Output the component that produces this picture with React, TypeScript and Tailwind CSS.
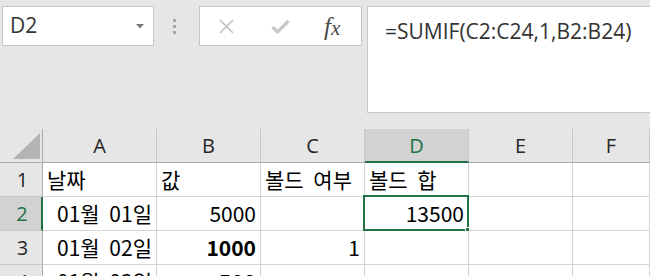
import React from 'react';

const CELL_FONT = "font-['Noto_Sans_CJK_KR','Noto_Sans',sans-serif]";

type Cell = { text?: string; align?: 'left' | 'right'; bold?: boolean };

const COLS = [
  { key: 'A', w: 'w-[114px]' },
  { key: 'B', w: 'w-[104px]' },
  { key: 'C', w: 'w-[104px]' },
  { key: 'D', w: 'w-[104px]' },
  { key: 'E', w: 'w-[104px]' },
  { key: 'F', w: 'flex-1' },
];

const ROWS: Cell[][] = [
  [{ text: '날짜' }, { text: '값' }, { text: '볼드 여부' }, { text: '볼드 합' }, {}, {}],
  [{ text: '01월 01일', align: 'right' }, { text: '5000', align: 'right' }, {}, { text: '13500', align: 'right' }, {}, {}],
  [{ text: '01월 02일', align: 'right' }, { text: '1000', align: 'right', bold: true }, { text: '1', align: 'right' }, {}, {}, {}],
  [{ text: '01월 03일', align: 'right' }, { text: '500', align: 'right', bold: true }, {}, {}, {}, {}],
];

function FormulaToolbar() {
  return (
    <div className="flex h-[129px] shrink-0 items-start pl-[2px] pt-[6px]">
      {/* name box */}
      <div className="flex h-[40px] w-[152px] items-center justify-between border border-[#c6c6c6] bg-white pl-[7px] pr-[9px]">
        <span className="font-['Open_Sans',sans-serif] text-[21px] text-[#333]">D2</span>
        <svg width="8" height="5" viewBox="0 0 8 5">
          <path d="M0 0h8L4 4.5z" fill="#7a7a7a" />
        </svg>
      </div>
      {/* grip */}
      <div className="flex h-[40px] w-[45px] flex-col items-center justify-center gap-[3px] pr-[4px]">
        <span className="h-[3px] w-[3px] bg-[#a6a6a6]" />
        <span className="h-[3px] w-[3px] bg-[#a6a6a6]" />
        <span className="h-[3px] w-[3px] bg-[#a6a6a6]" />
      </div>
      {/* cancel / enter / fx */}
      <div className="flex h-[40px] w-[163px] items-center border border-[#c6c6c6] bg-white pl-[18px]">
        <svg width="17" height="17" viewBox="0 0 17 17" className="mr-[36px]">
          <path d="M2 2l13 13M15 2L2 15" stroke="#c2c2c2" strokeWidth="1.7" fill="none" />
        </svg>
        <svg width="19" height="15" viewBox="0 0 19 15" className="mr-[34px]">
          <path d="M1.5 8l5 5L17.5 2" stroke="#c8c8c8" strokeWidth="3.2" fill="none" />
        </svg>
        <span className="font-['Liberation_Serif',serif] text-[25px] leading-none italic text-[#4a4a4a]">
          f<span className="text-[21px]">x</span>
        </span>
      </div>
      {/* formula bar */}
      <div className="ml-[5px] h-[107px] flex-1 border border-[#c6c6c6] border-r-0 bg-white pl-[17px] pt-[9px]">
        <span className="font-['Open_Sans',sans-serif] text-[21px] text-[#333]">
          =SUMIF(C2:C24,1,B2:B24)
        </span>
      </div>
    </div>
  );
}

function HeaderRow() {
  return (
    <div className="flex h-[34px] shrink-0">
      <div className="relative w-[43px] border-r border-b border-[#ababab]">
        <svg width="27" height="26" viewBox="0 0 27 26" className="absolute left-[13px] top-[4px]">
          <path d="M27 0V26H0z" fill="#b4b4b4" />
        </svg>
      </div>
      {COLS.map((c) =>
        c.key === 'D' ? (
          <div
            key={c.key}
            className={`${c.w} flex items-center justify-center border-r border-[#c6c6c6] border-b-2 border-b-[#217346] bg-[#d2d2d2] pt-[1px] font-['Open_Sans',sans-serif] text-[20px] text-[#217346]`}
          >
            {c.key}
          </div>
        ) : (
          <div
            key={c.key}
            className={`${c.w} flex items-center justify-center border-r border-b border-r-[#c6c6c6] border-b-[#ababab] pt-[1px] font-['Open_Sans',sans-serif] text-[20px] text-[#262626]`}
          >
            {c.key}
          </div>
        ),
      )}
    </div>
  );
}

function GridRow({ n, cells }: { n: number; cells: Cell[] }) {
  const selected = n === 2;
  return (
    <div className="flex h-[34px] shrink-0">
      <div
        className={
          selected
            ? "flex w-[43px] items-center justify-center border-r-2 border-b border-r-[#217346] border-b-[#c6c6c6] bg-[#d2d2d2] pl-[3px] font-['Open_Sans',sans-serif] text-[20px] text-[#217346]"
            : "flex w-[43px] items-center justify-center border-r border-b border-r-[#ababab] border-b-[#c6c6c6] pl-[3px] font-['Open_Sans',sans-serif] text-[20px] text-[#262626]"
        }
      >
        {n}
      </div>
      {cells.map((cell, i) => {
        const col = COLS[i];
        const active = selected && col.key === 'D';
        return (
          <div
            key={col.key}
            className={`${col.w} relative flex items-center border-r border-b border-[#d4d4d4] bg-white px-[4px] pt-[1px] ${CELL_FONT} text-[21px] [word-spacing:5px] text-black ${
              cell.align === 'right' ? 'justify-end' : 'justify-start'
            } ${cell.bold ? 'font-bold' : ''}`}
          >
            <span className="whitespace-nowrap">{cell.text}</span>
            {active && (
              <>
                <div className="pointer-events-none absolute -top-[2px] -left-[2px] -right-[1px] -bottom-[1px] border-2 border-[#217346]" />
                <div className="absolute -right-[4px] -bottom-[4px] h-[7px] w-[7px] border border-white bg-[#217346]" />
              </>
            )}
          </div>
        );
      })}
    </div>
  );
}

export default function App() {
  return (
    <div className="flex h-[276px] w-[650px] flex-col overflow-hidden bg-[#e6e6e6]">
      <FormulaToolbar />
      <HeaderRow />
      {ROWS.map((cells, i) => (
        <GridRow key={i} n={i + 1} cells={cells} />
      ))}
    </div>
  );
}
